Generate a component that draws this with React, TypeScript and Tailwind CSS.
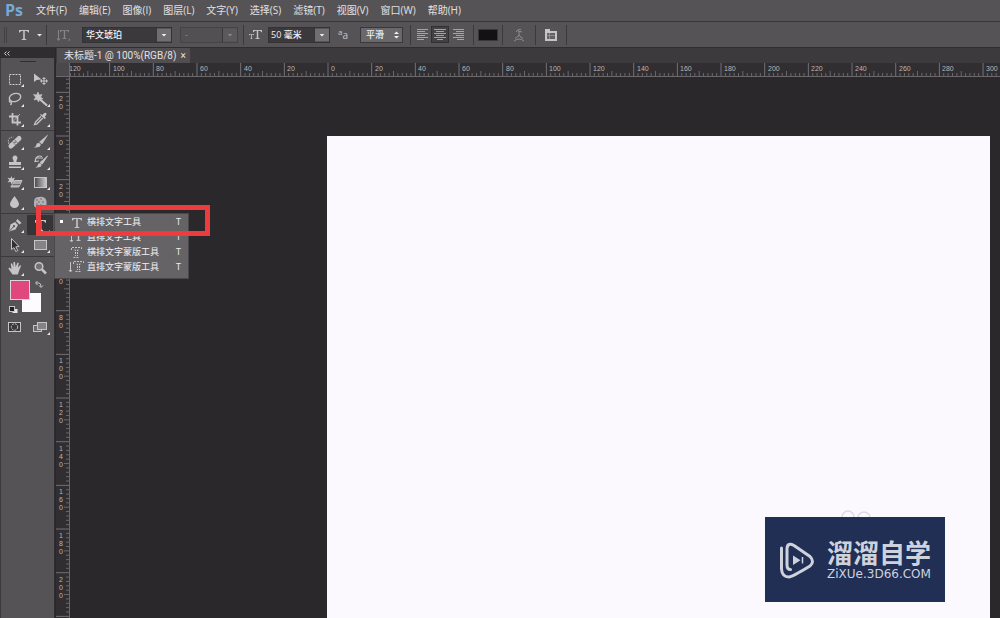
import { useLayoutEffect, useRef, useState, type ReactNode } from "react";

const STEP = 43.67;

const menus = [
  "文件(F)",
  "编辑(E)",
  "图像(I)",
  "图层(L)",
  "文字(Y)",
  "选择(S)",
  "滤镜(T)",
  "视图(V)",
  "窗口(W)",
  "帮助(H)",
];

function Serif({ x, y, size, fill = "#c6c4c7" }: { x: number; y: number; size: number; fill?: string }) {
  const s = size / 10;
  return (
    <path
      transform={`translate(${x} ${y}) scale(${s})`}
      d="M0 0H10V2.6H9.2Q8.9 .9 7.2 .9H5.8V8.2Q5.8 9.2 7.4 9.3V10H2.6V9.3Q4.2 9.2 4.2 8.2V.9H2.8Q1.1 .9 .8 2.6H0Z"
      fill={fill}
    />
  );
}

function SerifOutline({ x, y }: { x: number; y: number }) {
  return (
    <path
      transform={`translate(${x} ${y})`}
      d="M.5 3V.5H10.5V3M3.5 3H4.5V9M7.5 3H6.5V9M2.5 10.5H8.5"
      fill="none"
      stroke="#c6c4c7"
      strokeDasharray="2 1"
    />
  );
}

const tools: Record<string, ReactNode> = {
  marquee: <rect x="8.5" y="5.5" width="11" height="10" fill="none" stroke="#d0ced1" strokeDasharray="2 1" />,
  move: (
    <g fill="#c6c4c7">
      <path d="M7 4.500V13L9.500 11L14.500 10.500Z" />
      <path d="M17 8L19 10H17.500V11.500H19V10L21 12L19 14V12.500H17.500V14H19L17 16L15 14H16.500V12.500H15V14L13 12L15 10V11.500H16.500V10H15Z" />
    </g>
  ),
  lasso: (
    <g fill="none" stroke="#c6c4c7" strokeWidth="1.4">
      <ellipse cx="14" cy="8.5" rx="5.800" ry="4" transform="rotate(-15 14 8.500)" />
      <path d="M9.500 11Q7.500 12 9 13Q11.500 13 9.500 16" />
    </g>
  ),
  wand: (
    <g stroke="#c6c4c7" fill="#c6c4c7">
      <path d="M12 9.500L20 16.500" strokeWidth="2.2" />
      <path d="M11 3L12.200 6L15 5.500L13.600 8L16 10L12.800 10L11.500 13L10 10.200L7 11L8.600 8.200L6.500 5.500L9.600 6Z" strokeWidth=".6" />
    </g>
  ),
  crop: (
    <g fill="none" stroke="#c6c4c7" strokeWidth="1.800">
      <path d="M11.500 4V13.500H20" />
      <path d="M8 7.500H16.500V16.500" />
      <path d="M12 12.500L19 5" strokeWidth=".8" />
    </g>
  ),
  dropper: (
    <g fill="#c6c4c7">
      <path d="M14 5L15.200 6.2L17 4.3Q19 3 19.500 5Q19.500 6 17.800 7.500L19 9L17.700 10L13 5.800Z" />
      <path d="M14 7.500L8.500 13L7.500 15.500L10 14.800L15.800 9" fill="none" stroke="#c6c4c7" strokeWidth="1.300" />
    </g>
  ),
  heal: (
    <g>
      <path d="M10 14L18 6.500" stroke="#c6c4c7" strokeWidth="5" strokeLinecap="round" />
      <path d="M11.500 9.500L15 13.500M13.500 7.500L17 11.500" stroke="#6d6b6e" strokeWidth=".8" />
      <circle cx="14" cy="10.200" r=".8" fill="#555356" />
      <path d="M8 12Q5.500 5.500 12.500 5" fill="none" stroke="#c6c4c7" strokeDasharray="1.500 1" />
    </g>
  ),
  brush: (
    <g fill="#c6c4c7">
      <path d="M12.500 10L20.500 3.300L15 12Z" stroke="#c6c4c7" strokeWidth=".6" />
      <path d="M6.500 15.500Q9.500 14.500 9.500 12Q11 9.800 13.600 12Q14.500 16 6.500 15.500Z" />
    </g>
  ),
  stamp: (
    <g fill="#c6c4c7">
      <path d="M14 3.500A2.500 2.500 0 0 1 16 7.500Q15.200 8.500 15.500 10H20V13H8V10H12.500Q12.800 8.500 12 7.500A2.500 2.500 0 0 1 14 3.500Z" />
      <rect x="8" y="14.500" width="12" height="1.500" />
    </g>
  ),
  history: (
    <g fill="#c6c4c7">
      <path d="M13 10.500L20.500 4L15.300 12Z" stroke="#c6c4c7" strokeWidth=".8" />
      <path d="M8 15.500Q11 14.500 11 12Q13 10.500 14.500 12.500Q15 16 8 15.500Z" />
      <path d="M9 6H16M15 4.500Q11 3 9 6L8 9.500L12 9" fill="none" stroke="#c6c4c7" strokeWidth="1.200" />
    </g>
  ),
  eraser: (
    <g>
      <path d="M10.500 4L11.300 6.500L14 5.500L12.800 8L15 9.500L12 9.800L10.500 12.500L9.500 9.800L6.500 10.500L8.300 8L6.500 5.800L9.500 6.300Z" fill="#c6c4c7" />
      <path d="M14 8.500H21L17.800 15H9.800Z" fill="#a9a7aa" stroke="#c6c4c7" />
      <path d="M11.500 12.500H19" stroke="#6d6b6e" />
    </g>
  ),
  gradient: (
    <g>
      <defs>
        <linearGradient id="tool-gradient">
          <stop offset="0" stopColor="#4a484b" />
          <stop offset="1" stopColor="#cfcdd0" />
        </linearGradient>
      </defs>
      <rect x="7.500" y="5.500" width="12" height="10" fill="url(#tool-gradient)" stroke="#c6c4c7" />
    </g>
  ),
  blur: <path d="M13.500 4Q18 10 18 12A4.500 4 0 0 1 9 12Q9 10 13.500 4Z" fill="#c6c4c7" />,
  sponge: (
    <g>
      <path d="M7 10Q7 5 12 5Q18 4 19.500 9V13Q19 15.500 16 15.500H9Q7 15 7 13Z" fill="#b3b1b4" />
      <path d="M9 8H11M13 7H15M11 10H13M15 10H17M9 12H11M13 13H15" stroke="#727073" />
    </g>
  ),
  pen: (
    <g fill="#c6c4c7">
      <path d="M8 16.500L9.500 9.500L14 7L17 10L14.500 14.500Z" />
      <path d="M15 6L16.500 4L20.500 8L18.500 9.500Z" />
      <path d="M8.500 16L12.800 11.500" stroke="#555356" />
      <circle cx="13" cy="11.200" r="1.100" fill="#555356" />
    </g>
  ),
  type: <Serif x={8} y={5} size={11} />,
  select: <path d="M10.500 3.500L18 11.500L14.800 11.800L16.800 15.500L14.800 16.500L13 12.600L10.500 14.500Z" fill="#302e31" stroke="#c6c4c7" />,
  rect: <rect x="7.500" y="5.500" width="12" height="9" fill="#858386" stroke="#c6c4c7" />,
  hand: (
    <path
      d="M11.500 16.500L8 11.500Q6.800 9.800 8.200 9.500Q9 9.500 10.500 11.300L9.800 6Q10 4.800 11.200 5.700L12.500 9.200L12.400 4.500Q13.200 3.200 14.100 4.400L14.700 9L16.200 5Q17.200 4 17.700 5.200L16.900 9.700L18.800 7.500Q19.900 6.900 20 8L18.200 12.500L16.800 16.500Z"
      fill="#c6c4c7"
    />
  ),
  zoom: (
    <g fill="none" stroke="#c6c4c7">
      <circle cx="12" cy="8.500" r="3.800" strokeWidth="1.500" fill="#747275" />
      <path d="M15 11.500L19 15.500" strokeWidth="2.500" />
    </g>
  ),
  mask: (
    <g fill="none" stroke="#c6c4c7">
      <rect x="7.500" y="5.500" width="12" height="9" fill="#3b393c" />
      <circle cx="13.500" cy="10" r="3.200" strokeDasharray="2 1" />
    </g>
  ),
  screen: (
    <g fill="#6c6a6d" stroke="#c6c4c7">
      <rect x="6.500" y="8.500" width="8" height="6" />
      <rect x="10.500" y="5.500" width="9" height="7" fill="#858386" />
    </g>
  ),
};

const groups: [string, string][][] = [
  [
    ["marquee", "矩形选框工具"],
    ["move", "移动工具"],
    ["lasso", "套索工具"],
    ["wand", "魔棒工具"],
    ["crop", "裁剪工具"],
    ["dropper", "吸管工具"],
  ],
  [
    ["heal", "修复画笔工具"],
    ["brush", "画笔工具"],
    ["stamp", "仿制图章工具"],
    ["history", "历史记录画笔工具"],
    ["eraser", "橡皮擦工具"],
    ["gradient", "渐变工具"],
    ["blur", "模糊工具"],
    ["sponge", "海绵工具"],
  ],
  [
    ["pen", "钢笔工具"],
    ["type", "文字工具"],
    ["select", "路径选择工具"],
    ["rect", "矩形工具"],
  ],
  [
    ["hand", "抓手工具"],
    ["zoom", "缩放工具"],
  ],
];

const noFlyout = ["move", "zoom", "mask"];

function Tool({ id, label }: { id: string; label: string }) {
  return (
    <button type="button" aria-label={label} className={id === "type" ? "h-5 bg-[#363437]" : "h-5"}>
      <svg viewBox="0 0 26 20" className="block h-5 w-[26px]">
        {tools[id]}
        {!noFlyout.includes(id) && <path d="M23 15V18H20Z" fill="#e8e6e9" />}
      </svg>
    </button>
  );
}

function Toolbox() {
  return (
    <aside className="flex w-[55px] shrink-0 flex-col border-r border-[#2f2d30] bg-[#2f2d30]">
      <button type="button" aria-label="折叠面板" className="flex h-[10px] items-center pl-1">
        <svg viewBox="0 0 6 5" className="h-[5px] w-[6px]">
          <path d="M2.500 .5L.5 2.500L2.500 4.500M5.500 .5L3.500 2.500L5.500 4.500" fill="none" stroke="#d0ced1" />
        </svg>
      </button>
      <div className="flex-1 border-l border-[#3b393c] bg-[#555356]">
        <div className="flex h-[11px] justify-center pt-[3px]">
          <span className="h-px w-4 bg-[#2f2d30]" />
        </div>
        {groups.map((group, i) => (
          <div
            key={i}
            className={
              i === 0
                ? "grid grid-cols-[26px_26px] pb-px"
                : "grid grid-cols-[26px_26px] border-t border-[#3b393c] py-px"
            }
          >
            {group.map(([id, label]) => (
              <Tool key={id} id={id} label={label} />
            ))}
          </div>
        ))}
        <svg viewBox="0 0 52 38" className="block h-[38px] w-[52px]">
          <rect x="21" y="14" width="19" height="19" fill="#fcfbfd" />
          <rect x="9.500" y="1.500" width="19" height="19" fill="#e0477c" stroke="#d9d7da" />
          <path d="M35 4H38Q40 4 40 8M36.500 2L34.500 4L36.500 6M38 6.500L40 8.500L42 6.500" fill="none" stroke="#c6c4c7" />
          <rect x="11.500" y="30" width="5" height="4" fill="#e8e6e9" />
          <rect x="8.500" y="27.500" width="5" height="5" fill="#222023" stroke="#c6c4c7" />
        </svg>
        <div className="grid grid-cols-[26px_26px]">
          <Tool id="mask" label="以快速蒙版模式编辑" />
          <Tool id="screen" label="更改屏幕模式" />
        </div>
      </div>
    </aside>
  );
}

function Divider() {
  return <span className="h-5 w-px shrink-0 bg-[#3b393c]" />;
}

function DropArrow({ dim = false }: { dim?: boolean }) {
  return (
    <svg
      viewBox="0 0 15 14"
      className="pointer-events-none absolute right-0 top-0 h-full w-[15px] border-l border-[#39373a]"
    >
      <rect width="15" height="14" fill={dim ? "#5b595c" : "#706e71"} />
      <path d="M5 6H10L7.500 8.500Z" fill={dim ? "#8a888b" : "#f2f0f3"} />
    </svg>
  );
}

function OptionsBar() {
  return (
    <div className="flex h-[27px] items-center border-y border-t-[#39373a] border-b-[#302e31] bg-[#555356] pl-1">
      <span className="h-4 w-[3px] border-x border-[#434144]" />
      <button type="button" aria-label="当前工具" className="ml-[10px] mr-[3px]">
        <svg viewBox="0 0 26 14" className="block h-[14px] w-[26px]">
          <Serif x={2} y={2} size={10} />
          <path d="M20 6H25L22.500 8.500Z" fill="#e8e6e9" />
        </svg>
      </button>
      <Divider />
      <button type="button" aria-label="切换文本取向" className="mx-2">
        <svg viewBox="0 0 18 14" className="block h-[14px] w-[18px]">
          <path d="M3.500 2V12M2 10.500L3.500 12.500L5 10.500" fill="none" stroke="#858386" />
          <Serif x={5} y={2} size={9} fill="#858386" />
          <path d="M13 12.500L15 12.500V10Z" fill="#858386" />
        </svg>
      </button>
      <div className="relative ml-px h-4 w-[90px] border border-[#343235] bg-[#3b393c]">
        <select aria-label="字体" className="block h-full w-full appearance-none pl-[3px] text-[9px] font-medium leading-[14px] text-[#f2f0f3]">
          <option>华文琥珀</option>
        </select>
        <DropArrow />
      </div>
      <div className="relative ml-2 h-4 w-[58px] border border-[#454346] bg-[#525053]">
        <select disabled aria-label="字形" className="block h-full w-full appearance-none pl-1 text-[9px] leading-[14px] text-[#8a888b] opacity-100">
          <option>-</option>
        </select>
        <DropArrow dim />
      </div>
      <span className="w-[5px]" />
      <Divider />
      <label htmlFor="font-size" aria-label="字体大小" className="mx-[5px]">
        <svg viewBox="0 0 14 14" className="block h-[14px] w-[14px]">
          <Serif x={4} y={2} size={9} />
          <Serif x={0} y={6} size={5} />
        </svg>
      </label>
      <div className="relative h-4 w-[62px] border border-[#343235] bg-[#3b393c]">
        <select id="font-size" className="block h-full w-full appearance-none pl-[2px] text-[9px] font-medium leading-[14px] text-[#f2f0f3]">
          <option>50 毫米</option>
        </select>
        <DropArrow />
      </div>
      <label htmlFor="anti-alias" className="ml-2 w-5 text-[10px] leading-[14px] text-[#c6c4c7]">
        <sup className="text-[8px]">a</sup>a
      </label>
      <div className="relative ml-[2px] h-4 w-[43px] border border-[#39373a] bg-[#6a686b]">
        <select id="anti-alias" className="block h-full w-full appearance-none pl-[5px] text-[9px] font-medium leading-[14px] text-[#f2f0f3]">
          <option>平滑</option>
        </select>
        <svg viewBox="0 0 5 8" className="pointer-events-none absolute right-[3px] top-[3px] h-2 w-[5px]">
          <path d="M0 3H5L2.500 .5ZM0 5H5L2.500 7.500Z" fill="#f2f0f3" />
        </svg>
      </div>
      <span className="w-[7px]" />
      <Divider />
      <div className="ml-[2px] flex">
        {["左对齐文本", "居中对齐文本", "右对齐文本"].map((label, i) => (
          <button
            key={label}
            type="button"
            aria-label={label}
            className={
              i === 1
                ? "h-[17px] w-[18px] border border-[#323033] bg-[#434144]"
                : "h-[17px] w-[18px] border border-transparent"
            }
          >
            <svg viewBox="0 0 16 15" className="block h-[15px] w-4">
              <path
                d={
                  [
                    "M3 2.500H14M3 4.500H11M3 6.500H14M3 8.500H11M3 10.500H14M3 12.500H10",
                    "M2 2.500H14M4 4.500H12M2 6.500H14M4 8.500H12M2 10.500H14M5 12.500H11",
                    "M3 2.500H14M6 4.500H14M3 6.500H14M6 8.500H14M3 10.500H14M7 12.500H14",
                  ][i]
                }
                stroke="#a5a3a6"
              />
            </svg>
          </button>
        ))}
      </div>
      <span className="w-[6px]" />
      <Divider />
      <button type="button" aria-label="文本颜色" className="mx-1 h-3 w-5 border border-[#39373a] bg-[#131114]" />
      <Divider />
      <button type="button" aria-label="创建文字变形" className="mx-[9px]">
        <svg viewBox="0 0 14 14" className="block h-[14px] w-[14px]">
          <path d="M2 13Q7 9 12 13M3 10.500L7 7.500L11 10.500M7 8V3M4 4Q5 1 9 1.500M6 3L10 4" fill="none" stroke="#8f8d90" />
        </svg>
      </button>
      <Divider />
      <button type="button" aria-label="切换字符和段落面板" className="mx-2">
        <svg viewBox="0 0 14 14" className="block h-[14px] w-[14px]">
          <path d="M1 1H6V3H13V13H1Z" fill="#c6c4c7" />
          <path d="M3 5H11V11H3Z" fill="#636164" />
          <path d="M5.500 5V11M3 7.500H11" stroke="#8f8d90" />
        </svg>
      </button>
      <Divider />
    </div>
  );
}

function tickLength(i: number, full: number) {
  if (i % 10 === 0) return full;
  return i % 5 === 0 ? 5 : 3;
}

function useSize() {
  const ref = useRef<SVGSVGElement>(null);
  const [size, setSize] = useState({ width: 0, height: 0 });
  useLayoutEffect(() => {
    const node = ref.current;
    if (!node) return;
    const measure = () => {
      const box = node.getBoundingClientRect();
      setSize({ width: box.width, height: box.height });
    };
    measure();
    const observer = new ResizeObserver(measure);
    observer.observe(node);
    return () => observer.disconnect();
  }, []);
  return { ref, ...size };
}

function tickRange(first: number, zero: number, length: number) {
  const last = Math.floor(((length - zero) * 10) / STEP);
  return Array.from({ length: Math.max(0, last - first + 1) }, (_, i) => i + first);
}

function HorizontalRuler() {
  const { ref, width } = useSize();
  const zero = 258;
  const ticks = tickRange(-60, zero, width);
  return (
    <svg ref={ref} className="block h-[14px] min-w-0 flex-1 bg-[#302e31]">
      {ticks.map((t) => {
        const x = zero + (t * STEP) / 10;
        return <path key={t} d={`M${x} ${13 - tickLength(t, 13)}V13`} stroke={t % 10 ? "#6a686b" : "#737174"} />;
      })}
      <path d={`M0 13.500H${width}`} stroke="#6a686b" />
      {ticks
        .filter((t) => t % 10 === 0)
        .map((t) => (
          <text
            key={t}
            x={Math.round(zero + (t * STEP) / 10) + 3}
            y="8"
            className="fill-[#b9b7ba] font-['Liberation_Sans',sans-serif] text-[7px]"
          >
            {Math.abs(t * 2)}
          </text>
        ))}
    </svg>
  );
}

function VerticalRuler() {
  const { ref, height } = useSize();
  const zero = 59;
  const ticks = tickRange(-13, zero, height);
  const labels = ticks
    .filter((t) => t % 10 === 0)
    .map((t) => ({ t, y: Math.round(zero + (t * STEP) / 10), digits: String(Math.abs(t * 2)).split("") }))
    .filter(({ y, digits }) => y + 2 + digits.length * 8 < height);
  return (
    <svg ref={ref} className="block h-full w-[14px] shrink-0 bg-[#302e31]">
      {ticks.map((t) => {
        const y = zero + (t * STEP) / 10;
        return <path key={t} d={`M${13 - tickLength(t, 13)} ${y}H13`} stroke={t % 10 ? "#6a686b" : "#737174"} />;
      })}
      <path d={`M13.500 0V${height}`} stroke="#6a686b" />
      {labels.map(({ t, y, digits }) =>
        digits.map((digit, i) => (
          <text
            key={`${t}-${i}`}
            x="5"
            y={y + 9 + i * 8}
            textAnchor="middle"
            className="fill-[#b9b7ba] font-['Liberation_Sans',sans-serif] text-[7px]"
          >
            {digit}
          </text>
        )),
      )}
    </svg>
  );
}

const typeTools: [string, ReactNode][] = [
  ["横排文字工具", <Serif key="h" x={4} y={3} size={10} />],
  [
    "直排文字工具",
    <g key="v">
      <path d="M3.500 2V11M2 10L3.500 12L5 10" fill="none" stroke="#c6c4c7" />
      <Serif x={6} y={2} size={9} />
    </g>,
  ],
  ["横排文字蒙版工具", <SerifOutline key="hm" x={3} y={2} />],
  [
    "直排文字蒙版工具",
    <g key="vm">
      <path d="M2.500 2V11M1 10L2.500 12L4 10" fill="none" stroke="#c6c4c7" />
      <SerifOutline x={5} y={1} />
    </g>,
  ],
];

function TypeFlyout() {
  const [active, setActive] = useState(0);
  return (
    <div className="absolute left-[54px] top-[165px] z-10 w-[135px] border border-[#4a484b] bg-[#656366] pb-1 text-[9px] text-[#f2f0f3]">
      {typeTools.map(([name, icon], i) => (
        <button
          key={name}
          type="button"
          onClick={() => setActive(i)}
          className="flex h-[15px] w-full items-center pl-[5px] pr-[7px]"
        >
          <span className={i === active ? "h-[3px] w-[3px] bg-white" : "h-[3px] w-[3px]"} />
          <svg viewBox="0 0 17 14" className="ml-[5px] mr-[2px] h-[14px] w-[17px] shrink-0">
            {icon}
          </svg>
          <span className="leading-[15px]">{name}</span>
          <span className="ml-auto leading-[15px]">T</span>
        </button>
      ))}
    </div>
  );
}

function Watermark() {
  return (
    <div className="absolute bottom-4 right-[55px]">
      <svg viewBox="0 0 32 8" className="ml-[75px] block h-2 w-8">
        <g fill="none" stroke="#dddbe2" strokeWidth="1.500">
          <circle cx="8" cy="8" r="6" />
          <circle cx="24" cy="9" r="6" />
        </g>
      </svg>
      <div className="flex h-[85px] w-[180px] items-center bg-[#212f55] pl-[14px] text-[#ced2dd]">
        <svg viewBox="0 0 36 38" className="mr-3 h-[38px] w-9 shrink-0">
          <g fill="none" stroke="currentColor" strokeWidth="3" strokeLinecap="round" strokeLinejoin="round">
            <path d="M2.500 7V28Q3 36 10 36Q13 36 31 25Q36 20.500 31 15.500L15 4.500Q8.500 1 8 7.500V24Q8 28.500 11.500 28.500" />
          </g>
          <path d="M14 14.500V24L21.500 19.200Z" fill="currentColor" />
          <path d="M23.500 16V22.500" stroke="currentColor" strokeWidth="1.500" />
        </svg>
        <div className="pb-[2px]">
          <p className="whitespace-nowrap text-[26px] font-bold leading-[30px]">溜溜自学</p>
          <p className="whitespace-nowrap font-['DejaVu_Sans'] text-[12px] leading-[12px]">ZiXUe.3D66.COM</p>
        </div>
      </div>
    </div>
  );
}

export default function App() {
  return (
    <div className="flex h-screen flex-col overflow-hidden bg-[#2a282b] font-['Open_Sans','Noto_Sans_CJK_SC',sans-serif] text-[#e3e1e4]">
      <header className="flex h-[21px] items-center bg-[#555356] pb-[2px] pl-[5px]">
        <span className="w-[31px] font-['Open_Sans'] text-[16px] font-bold leading-5 text-[#78a9d6]">Ps</span>
        <nav className="flex gap-3">
          {menus.map((name) => (
            <button key={name} type="button" className="whitespace-nowrap text-[10px] leading-5">
              {name}
            </button>
          ))}
        </nav>
      </header>
      <OptionsBar />
      <div className="relative flex min-h-0 flex-1">
        <Toolbox />
        <main className="flex min-w-0 flex-1 flex-col pl-px">
          <div className="flex h-[15px] bg-[#3c3a3d] pl-px">
            <div className="flex items-center gap-1 bg-[#504e51] pl-[7px] pr-1 font-['Roboto','Noto_Sans_CJK_SC',sans-serif] text-[10px] leading-[15px]">
              <span className="whitespace-nowrap">未标题-1 @ 100%(RGB/8)</span>
              <button type="button" aria-label="关闭" className="leading-[15px]">
                ×
              </button>
            </div>
          </div>
          <div className="flex">
            <span className="h-[14px] w-[14px] shrink-0 border-b border-r border-[#6a686b] bg-[#4a484b]" />
            <HorizontalRuler />
          </div>
          <div className="flex min-h-0 flex-1">
            <VerticalRuler />
            <div className="min-w-0 flex-1 pl-[257px] pr-[10px] pt-[59px]">
              <div className="h-full bg-[#fbf9fe]" />
            </div>
          </div>
        </main>
        <TypeFlyout />
        <div className="absolute left-[36px] top-[157px] z-20 h-[31px] w-[174px] border-[5px] border-[#ee3c3e]" />
        <Watermark />
      </div>
    </div>
  );
}
